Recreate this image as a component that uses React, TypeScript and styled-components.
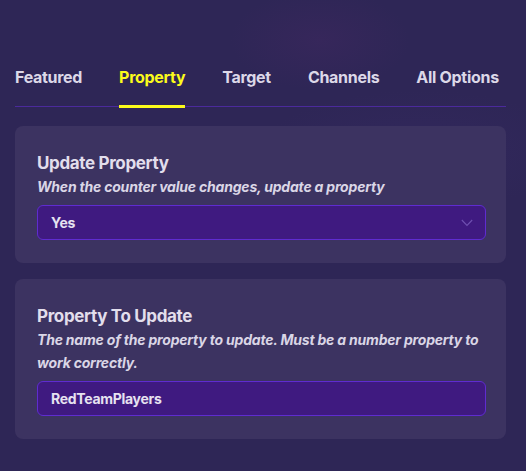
import styled, { createGlobalStyle } from 'styled-components';

const tabs = ['Featured', 'Property', 'Target', 'Channels', 'All Options'];

export default function App() {
  return (
    <Page>
      <GlobalStyle />
      <Tabs>
        {tabs.map((t) => (
          <Tab key={t} $active={t === 'Property'}>
            {t}
          </Tab>
        ))}
      </Tabs>

      <Card>
        <Title>Update Property</Title>
        <Description>When the counter value changes, update a property</Description>
        <Field>
          <FieldText>Yes</FieldText>
          <svg width="12" height="8" viewBox="0 0 12 8" fill="none">
            <path d="M0.8 1L6 6.4L11.2 1" stroke="#6f50b0" strokeWidth="1.1" />
          </svg>
        </Field>
      </Card>

      <Card>
        <Title>Property To Update</Title>
        <Description>
          The name of the property to update. Must be a number property to work correctly.
        </Description>
        <Field>
          <FieldText>RedTeamPlayers</FieldText>
        </Field>
      </Card>
    </Page>
  );
}

const GlobalStyle = createGlobalStyle`
  html, body {
    margin: 0;
    padding: 0;
    background: #2e2656;
  }
  body {
    font-family: Inter, "Noto Sans", sans-serif;
  }
`;

const Page = styled.div`
  width: 526px;
  height: 471px;
  box-sizing: border-box;
  padding: 62px 20px 0 15px;
  background:
    radial-gradient(ellipse 90px 50px at 320px 40px, rgba(70, 40, 100, 0.35), transparent),
    radial-gradient(ellipse 160px 60px at 420px 150px, rgba(60, 45, 110, 0.25), transparent),
    #2e2656;
  overflow: hidden;
`;

const Tabs = styled.div`
  display: flex;
  gap: 37px;
  border-bottom: 1px solid #4b2a9c;
  margin-bottom: 19px;
`;

const Tab = styled.div<{ $active?: boolean }>`
  font-size: 16px;
  line-height: 20px;
  font-weight: 700;
  letter-spacing: -0.3px;
  color: ${(p) => (p.$active ? '#fbfb1b' : '#dcd8e8')};
  padding: 5px 0 18px;
  margin-bottom: -2px;
  border-bottom: 3px solid ${(p) => (p.$active ? '#fbfb1b' : 'transparent')};
`;

const Card = styled.div`
  background: #3c3361;
  border-radius: 8px;
  padding: 25px 20px 23px 22px;
  margin-bottom: 16px;
`;

const Title = styled.div`
  font-size: 17px;
  font-weight: 700;
  letter-spacing: -0.35px;
  color: #e2deec;
  line-height: 24px;
`;

const Description = styled.div`
  font-size: 14px;
  font-weight: 700;
  font-style: italic;
  letter-spacing: -0.2px;
  color: #dad6e6;
  line-height: 23px;
  margin-bottom: 7px;
`;

const Field = styled.div`
  height: 35px;
  box-sizing: border-box;
  display: flex;
  align-items: center;
  justify-content: space-between;
  padding: 0 12px 0 13px;
  background: #3f1a80;
  border: 1px solid #5f2cd0;
  border-radius: 6px;
`;

const FieldText = styled.span`
  font-size: 14px;
  font-weight: 700;
  letter-spacing: -0.3px;
  color: #e6e2f0;
`;
